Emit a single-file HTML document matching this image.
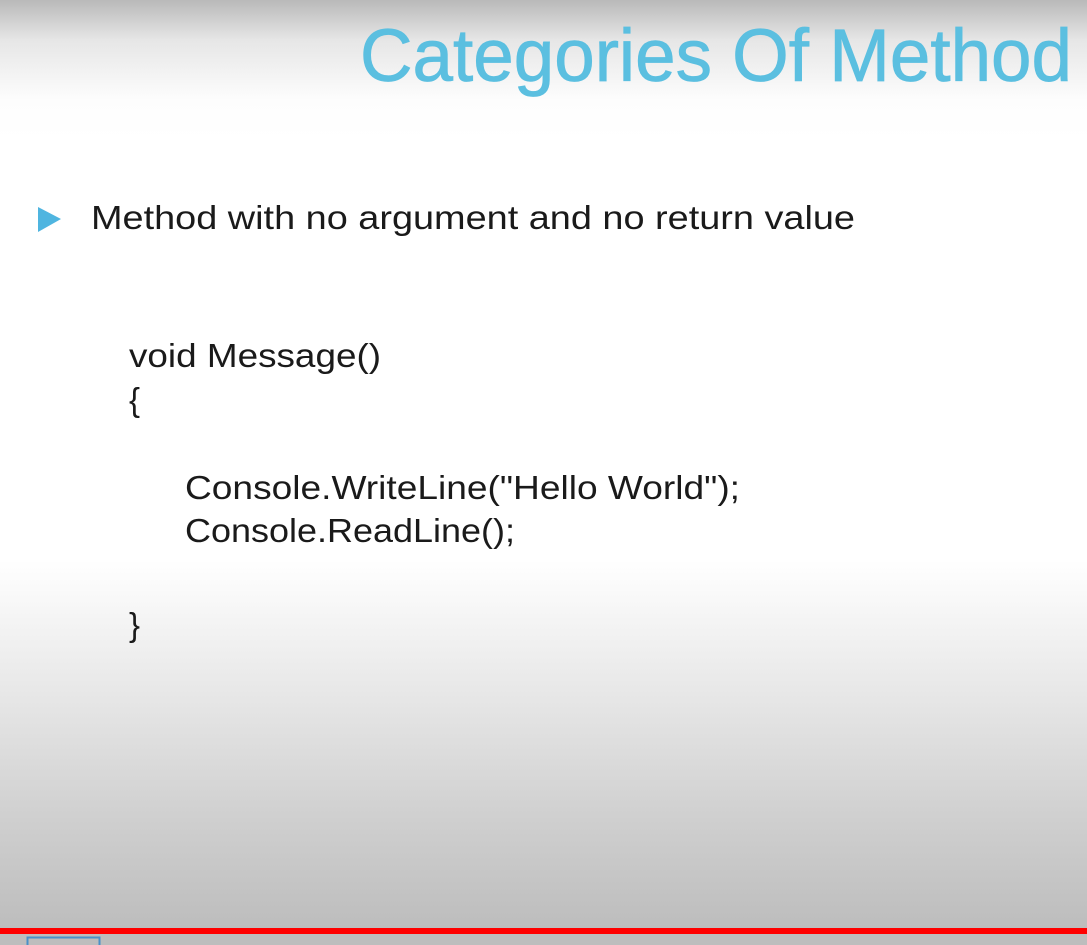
<!DOCTYPE html>
<html><head><meta charset="utf-8"><style>
html,body{margin:0;padding:0;width:1087px;height:945px;overflow:hidden}
body{background:linear-gradient(to bottom,#b9b9b9 0px,#e6e6e6 40px,#fdfdfd 100px,#fff 140px,#fff 560px,#e6e6e6 700px,#cfcfcf 820px,#bdbdbd 928px,#bdbdbd 945px)}
svg{position:absolute;left:0;top:0}
</style></head><body>
<svg width="1087" height="945" xmlns="http://www.w3.org/2000/svg">
<text x="360" y="81" font-family="Liberation Sans, sans-serif" font-size="74" fill="#5bbfe0" stroke="#5bbfe0" stroke-width="0.8" textLength="712" lengthAdjust="spacingAndGlyphs">Categories Of Method</text>
<polygon points="38,207 61,219 38,232" fill="#4fb5e0"/>
<g font-family="Liberation Sans, sans-serif" font-size="33" fill="#1a1a1a">
<text x="91" y="229" textLength="764" lengthAdjust="spacingAndGlyphs">Method with no argument and no return value</text>
<text x="129" y="367" textLength="252" lengthAdjust="spacingAndGlyphs">void  Message()</text>
<text x="129" y="411">{</text>
<text x="185" y="499" textLength="555" lengthAdjust="spacingAndGlyphs">Console.WriteLine("Hello World");</text>
<text x="185" y="542" textLength="330" lengthAdjust="spacingAndGlyphs">Console.ReadLine();</text>
<text x="129" y="636">}</text>
</g>
<rect x="0" y="928" width="1087" height="6" fill="#ff0000"/>
<rect x="27.5" y="937.5" width="72" height="12" fill="none" stroke="#4a90c8" stroke-width="2"/>
</svg>
</body></html>
